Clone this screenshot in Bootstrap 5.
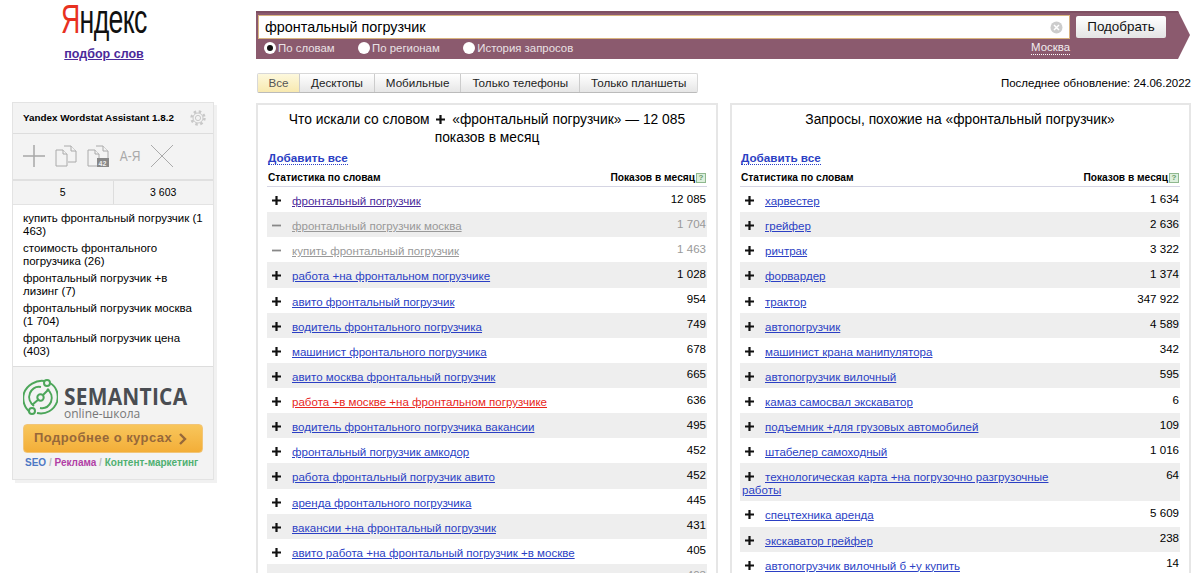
<!DOCTYPE html>
<html lang="ru"><head><meta charset="utf-8"><title>Wordstat</title>
<link href="https://cdn.jsdelivr.net/npm/bootstrap@5.3.0/dist/css/bootstrap.min.css" rel="stylesheet">
<style>
html,body{height:573px;overflow:hidden}
body{font:13px/1.15 "Liberation Sans",Arial,sans-serif;color:#000;background:#fff}
a{color:#2b3fc4}
.pg{width:1200px;height:573px;overflow:hidden}
.lcol{width:256px;flex:none}
.mcol{width:944px;flex:none;padding-top:11px}
.logo{height:103px}
.ya{display:inline-block;margin:-1px 0 0 61px;font:400 41px/41px "Liberation Sans",sans-serif;letter-spacing:-1px;transform:scaleX(.65);transform-origin:0 0;white-space:nowrap;color:#111;height:41px;vertical-align:top}
.ya b{color:#e8311f;font-weight:400}
.sub{display:block;text-align:center;width:208px;font-weight:700;font-size:12.5px;color:#4b2a9a;margin-top:7px;line-height:14px}
.wgt{width:202px;margin-left:12px;border:1px solid #e3e3e3;box-shadow:3px 3px 0 #f1f1f1;background:#fff;margin-top:-1px}
.w-h{height:31px;background:#f3f3f3;border-bottom:1px solid #ddd;font-size:9.85px;font-weight:700;padding:0 7px 0 10px;white-space:nowrap}
.w-t{height:47px;background:#f3f3f3;border-bottom:2px solid #e0e0e0;padding:0 10px 2px;gap:10px}
.az{font-size:15px;color:#a9a9a9;width:22px;text-align:center;transform:scaleX(.8);white-space:nowrap;display:flex;justify-content:center}
.w-c{height:24px;background:#f3f3f3;border-bottom:1px solid #e3e3e3;font-size:10.5px}
.w-c>div{flex:1;text-align:center;line-height:23px}
.w-c>div+div{border-left:1px solid #ddd}
.w-l{padding:7px 10px 8px;font-size:11.5px;line-height:13px;height:161px}
.w-l div{margin-bottom:4px}
.w-p{height:113px;background:#f3f3f3;border-top:1px solid #ddd;padding:11px 10px 0}
.smt{margin-left:6px}
.sm1{font:700 24px/20px "Open Sans","Liberation Sans",sans-serif;color:#4a4d52;letter-spacing:.3px;transform:scaleX(.87);transform-origin:0 0;white-space:nowrap;display:block;height:20px;margin-top:8px}
.sm2{font:12px/11px "Open Sans","Liberation Sans",sans-serif;color:#777;display:block;margin-top:2px}
.ob{height:29px;margin-top:5px;background:linear-gradient(#f8c65c,#f3ae38);border:1px solid #f2c577;border-radius:4px;font-weight:700;font-size:13px;color:#96683a;letter-spacing:.45px;display:flex;align-items:center;padding-left:10px;gap:7px}
.tg{font-size:10px;font-weight:700;margin-top:4px;padding-left:2px;white-space:nowrap;color:#bbb}
.tg .c1{color:#4d78c4}.tg .c2{color:#b13fa5}.tg .c3{color:#4fb071}
.sb{height:48px;width:934px;background:#8b5a6e;border-top:2px solid #7e4f62;clip-path:polygon(0 0,calc(100% - 12px) 0,100% 50%,calc(100% - 12px) 100%,0 100%);padding:2px 0 0 2px}
.qin{width:812px;height:24px;background:#fff;border:1px solid #d9b47f;font-size:14.4px;padding:0 6px;line-height:22px}
.qbtn{width:90px;height:22px;margin-left:6px;background:linear-gradient(#fff,#e4e4e4);border-radius:2px;font-size:13.4px;line-height:22px;text-align:center;color:#111;margin-top:1px}
.opts{height:18px;color:#e9e1e4;font-size:11.4px;width:812px;padding-left:6px;line-height:16px}
.opts i{display:inline-block;width:12px;height:12px;border-radius:50%;background:#fff;margin-right:2px;vertical-align:-2px;position:relative}
.opts i.on::after{content:"";position:absolute;left:3px;top:3px;width:6px;height:6px;border-radius:50%;background:#111}
.opts span{margin-right:23.500px}
.msk{margin-left:auto;color:#f2ecee;border-bottom:1px dotted #fff;line-height:13px;height:14px}
.tabs{margin-top:14px;height:30px;width:935px;padding-left:1px}
.tbg{display:flex;height:20px;border:1px solid #d8d8d8;border-bottom-color:#bbb;border-radius:2px;font-size:11.65px;line-height:18px;background:linear-gradient(#fff,#e6e6e6);color:#222}
.tbg div{padding:0 11px;border-left:1px solid #ccc}
.tbg div:first-child{border-left:0;background:linear-gradient(#fdf8dd,#f8e9b0);color:#555;padding:0 10.500px}
.upd{margin-left:auto;font-size:11.5px;line-height:20px}
.pnls{gap:12px;width:936px}
.pnl{width:462px;height:480px;border:2px solid #e6e6e6;border-bottom:0;padding:0 9px;flex:none}
.pnl+.pnl{width:461px;padding-left:8px}
.ph{font-size:13.8px;line-height:18px;height:43px;padding:6px 18px 0;text-align:center}
.ph svg{margin:0 3px;vertical-align:0}
.add{font-weight:700;font-size:11.7px;height:19px;line-height:14px;padding:2px 0 0 1px;margin-top:1px}
.add a{text-decoration:none;border-bottom:1px dotted #2b3fc4}
.hd{height:20px;border-bottom:1px solid #d5d5e3;font-size:10.2px;font-weight:700;padding:5px 1px 0;line-height:12px;margin-top:-1px}
.hd i{display:inline-block;width:10px;height:10px;border:1px solid #8fb88f;background:#dcefdc;color:#6a9a6a;font:700 8px/8px "Liberation Sans";text-align:center;font-style:normal;margin-left:1px;vertical-align:1px}
.rw{min-height:25.14px;padding:0 1px 0 0;font-size:11.55px}
.rw:nth-child(even){background:#eee}
.rw .wd{width:330px;padding:8px 0 4px 2px;line-height:13px}
.rw .pm{display:inline-block;width:23px;padding-left:3px;line-height:9px}
.rw .pm svg{float:left;margin-top:-2px}
.rw .nm{margin-left:auto;padding-top:4.500px;line-height:14px}
.rw.off a,.rw.off .nm{color:#999}
.rw.rd a{color:#e8261c}
.vis{color:#4b2a9a!important}
</style></head><body>
<svg width="0" height="0" class="d-block" aria-hidden="true"><defs>
<symbol id="p" viewBox="0 0 9 9"><path d="M4.500 0v9M0 4.500h9" stroke="#111" stroke-width="2.200"/></symbol>
<symbol id="m" viewBox="0 0 9 9"><path d="M0 4.500h9" stroke="#888" stroke-width="1.800"/></symbol>
</defs></svg>
<div class="pg d-flex">
<div class="lcol">
<div class="logo">
<div class="ya"><b>Я</b>ндекс</div>
<a class="sub" href="#">подбор слов</a>
</div>
<div class="wgt">
<div class="w-h d-flex align-items-center justify-content-between"><span>Yandex Wordstat Assistant 1.8.2</span>
<svg width="16" height="16" viewBox="0 0 16 16" fill="none" stroke="#c8c8c8"><circle cx="8" cy="8" r="6.500" stroke-width="2.400" stroke-dasharray="2.500 2.600"/><circle cx="8" cy="8" r="5"/><circle cx="8" cy="8" r="2.600"/></svg></div>
<div class="w-t d-flex align-items-center">
<svg width="22" height="22" viewBox="0 0 22 22" stroke="#a8a8a8" stroke-width="1.500"><path d="M11 0v22M0 11h22"/></svg>
<svg width="22" height="22" viewBox="0 0 22 22" fill="#f3f3f3" stroke="#aaa"><path d="M9 1h7l5 5v11h-8"/><path d="M16 1v5h5"/><path d="M1 5h7l4 4v12H1z"/><path d="M8 5v4h4"/></svg>
<svg width="22" height="22" viewBox="0 0 22 22" fill="#f3f3f3" stroke="#aaa"><path d="M9 1h7l5 5v10"/><path d="M16 1v5h5"/><path d="M1 5h7l4 4v12H1z"/><path d="M8 5v4h4"/><rect x="10" y="13" width="12" height="9" fill="#888" stroke="none"/><text x="11.500" y="20.500" font-size="7" font-weight="700" fill="#eee" stroke="none" font-family="Liberation Sans">42</text></svg>
<span class="az">А-Я</span>
<svg width="22" height="22" viewBox="0 0 22 22" stroke="#aaa"><path d="M0 0l22 22M22 0L0 22"/></svg>
</div>
<div class="w-c d-flex"><div>5</div><div>3 603</div></div>
<div class="w-l">
<div>купить фронтальный погрузчик (1 463)</div>
<div>стоимость фронтального погрузчика (26)</div>
<div>фронтальный погрузчик +в лизинг (7)</div>
<div>фронтальный погрузчик москва (1 704)</div>
<div>фронтальный погрузчик цена (403)</div>
</div>
<div class="w-p">
<div class="d-flex">
<svg width="35" height="39" viewBox="0 0 35 39" fill="none" stroke="#4ca65a" stroke-width="2" class="flex-shrink-0"><path d="M8 35C1 30-1 22 1 15 4 7 13 2 21 3"/><path d="M27 5c7 4 9 12 7 19-3 8-11 13-20 11"/><path d="M11 28c-4-3-6-8-4-13 2-4 6-7 11-6"/><path d="M24 11c4 3 6 8 4 13-2 4-6 7-11 6"/><circle cx="17.500" cy="19.500" r="3.200"/><path d="M9 27l7-6M26 11l-6 6"/><circle cx="24" cy="5" r="3" fill="#f3f3f3"/><circle cx="9" cy="33" r="3" fill="#f3f3f3"/></svg>
<div class="smt"><span class="sm1">SEMANTICA</span><span class="sm2">online-школа</span></div>
</div>
<div class="ob"><span>Подробнее о курсах</span><svg width="8" height="12" viewBox="0 0 8 12" fill="none" stroke="#96683a" stroke-width="2.400"><path d="M1 1l5 5-5 5"/></svg></div>
<div class="tg"><span class="c1">SEO</span> / <span class="c2">Реклама</span> / <span class="c3">Контент-маркетинг</span></div>
</div>
</div>
</div>
<div class="mcol">
<div class="sb">
<div class="d-flex"><div class="qin d-flex justify-content-between align-items-center"><span>фронтальный погрузчик</span><svg width="13" height="13" viewBox="0 0 13 13"><circle cx="6.500" cy="6.500" r="6" fill="#ccc"/><path d="M4 4l5 5M9 4l-5 5" stroke="#fff" stroke-width="1.500"/></svg></div><div class="qbtn">Подобрать</div></div>
<div class="opts d-flex align-items-center"><span><i class="on"></i>По словам</span><span><i></i>По регионам</span><span><i></i>История запросов</span><a class="msk text-decoration-none">Москва</a></div>
</div>
<div class="tabs d-flex">
<div class="tbg"><div>Все</div><div>Десктопы</div><div>Мобильные</div><div>Только телефоны</div><div>Только планшеты</div></div>
<div class="upd">Последнее обновление: 24.06.2022</div>
</div>
<div class="pnls d-flex">
<div class="pnl">
<div class="ph">Что искали со словом <svg width="9" height="9"><use href="#p"/></svg> «фронтальный погрузчик» — 12 085 показов в месяц</div>
<div class="add"><a href="#">Добавить все</a></div>
<div class="hd d-flex justify-content-between"><span>Статистика по словам</span><span>Показов в месяц<i>?</i></span></div>
<div>
<div class="rw d-flex"><div class="wd"><span class="pm"><svg width="9" height="9"><use href="#p"/></svg></span><a class="vis" href="#">фронтальный погрузчик</a></div><div class="nm">12 085</div></div>
<div class="rw d-flex off"><div class="wd"><span class="pm"><svg width="9" height="9"><use href="#m"/></svg></span><a href="#">фронтальный погрузчик москва</a></div><div class="nm">1 704</div></div>
<div class="rw d-flex off"><div class="wd"><span class="pm"><svg width="9" height="9"><use href="#m"/></svg></span><a href="#">купить фронтальный погрузчик</a></div><div class="nm">1 463</div></div>
<div class="rw d-flex"><div class="wd"><span class="pm"><svg width="9" height="9"><use href="#p"/></svg></span><a href="#">работа +на фронтальном погрузчике</a></div><div class="nm">1 028</div></div>
<div class="rw d-flex"><div class="wd"><span class="pm"><svg width="9" height="9"><use href="#p"/></svg></span><a href="#">авито фронтальный погрузчик</a></div><div class="nm">954</div></div>
<div class="rw d-flex"><div class="wd"><span class="pm"><svg width="9" height="9"><use href="#p"/></svg></span><a href="#">водитель фронтального погрузчика</a></div><div class="nm">749</div></div>
<div class="rw d-flex"><div class="wd"><span class="pm"><svg width="9" height="9"><use href="#p"/></svg></span><a href="#">машинист фронтального погрузчика</a></div><div class="nm">678</div></div>
<div class="rw d-flex"><div class="wd"><span class="pm"><svg width="9" height="9"><use href="#p"/></svg></span><a href="#">авито москва фронтальный погрузчик</a></div><div class="nm">665</div></div>
<div class="rw d-flex rd"><div class="wd"><span class="pm"><svg width="9" height="9"><use href="#p"/></svg></span><a href="#">работа +в москве +на фронтальном погрузчике</a></div><div class="nm">636</div></div>
<div class="rw d-flex"><div class="wd"><span class="pm"><svg width="9" height="9"><use href="#p"/></svg></span><a href="#">водитель фронтального погрузчика вакансии</a></div><div class="nm">495</div></div>
<div class="rw d-flex"><div class="wd"><span class="pm"><svg width="9" height="9"><use href="#p"/></svg></span><a href="#">фронтальный погрузчик амкодор</a></div><div class="nm">452</div></div>
<div class="rw d-flex"><div class="wd"><span class="pm"><svg width="9" height="9"><use href="#p"/></svg></span><a href="#">работа фронтальный погрузчик авито</a></div><div class="nm">452</div></div>
<div class="rw d-flex"><div class="wd"><span class="pm"><svg width="9" height="9"><use href="#p"/></svg></span><a href="#">аренда фронтального погрузчика</a></div><div class="nm">445</div></div>
<div class="rw d-flex"><div class="wd"><span class="pm"><svg width="9" height="9"><use href="#p"/></svg></span><a href="#">вакансии +на фронтальный погрузчик</a></div><div class="nm">431</div></div>
<div class="rw d-flex"><div class="wd"><span class="pm"><svg width="9" height="9"><use href="#p"/></svg></span><a href="#">авито работа +на фронтальный погрузчик +в москве</a></div><div class="nm">405</div></div>
<div class="rw d-flex off"><div class="wd"><span class="pm"><svg width="9" height="9"><use href="#m"/></svg></span><a href="#">фронтальный погрузчик цена</a></div><div class="nm">403</div></div>
</div>
</div>
<div class="pnl">
<div class="ph">Запросы, похожие на «фронтальный погрузчик»</div>
<div class="add"><a href="#">Добавить все</a></div>
<div class="hd d-flex justify-content-between"><span>Статистика по словам</span><span>Показов в месяц<i>?</i></span></div>
<div>
<div class="rw d-flex"><div class="wd"><span class="pm"><svg width="9" height="9"><use href="#p"/></svg></span><a href="#">харвестер</a></div><div class="nm">1 634</div></div>
<div class="rw d-flex"><div class="wd"><span class="pm"><svg width="9" height="9"><use href="#p"/></svg></span><a href="#">грейфер</a></div><div class="nm">2 636</div></div>
<div class="rw d-flex"><div class="wd"><span class="pm"><svg width="9" height="9"><use href="#p"/></svg></span><a href="#">ричтрак</a></div><div class="nm">3 322</div></div>
<div class="rw d-flex"><div class="wd"><span class="pm"><svg width="9" height="9"><use href="#p"/></svg></span><a href="#">форвардер</a></div><div class="nm">1 374</div></div>
<div class="rw d-flex"><div class="wd"><span class="pm"><svg width="9" height="9"><use href="#p"/></svg></span><a href="#">трактор</a></div><div class="nm">347 922</div></div>
<div class="rw d-flex"><div class="wd"><span class="pm"><svg width="9" height="9"><use href="#p"/></svg></span><a href="#">автопогрузчик</a></div><div class="nm">4 589</div></div>
<div class="rw d-flex"><div class="wd"><span class="pm"><svg width="9" height="9"><use href="#p"/></svg></span><a href="#">машинист крана манипулятора</a></div><div class="nm">342</div></div>
<div class="rw d-flex"><div class="wd"><span class="pm"><svg width="9" height="9"><use href="#p"/></svg></span><a href="#">автопогрузчик вилочный</a></div><div class="nm">595</div></div>
<div class="rw d-flex"><div class="wd"><span class="pm"><svg width="9" height="9"><use href="#p"/></svg></span><a href="#">камаз самосвал экскаватор</a></div><div class="nm">6</div></div>
<div class="rw d-flex"><div class="wd"><span class="pm"><svg width="9" height="9"><use href="#p"/></svg></span><a href="#">подъемник +для грузовых автомобилей</a></div><div class="nm">109</div></div>
<div class="rw d-flex"><div class="wd"><span class="pm"><svg width="9" height="9"><use href="#p"/></svg></span><a href="#">штабелер самоходный</a></div><div class="nm">1 016</div></div>
<div class="rw d-flex"><div class="wd"><span class="pm"><svg width="9" height="9"><use href="#p"/></svg></span><a href="#">технологическая карта +на погрузочно разгрузочные работы</a></div><div class="nm">64</div></div>
<div class="rw d-flex"><div class="wd"><span class="pm"><svg width="9" height="9"><use href="#p"/></svg></span><a href="#">спецтехника аренда</a></div><div class="nm">5 609</div></div>
<div class="rw d-flex"><div class="wd"><span class="pm"><svg width="9" height="9"><use href="#p"/></svg></span><a href="#">экскаватор грейфер</a></div><div class="nm">238</div></div>
<div class="rw d-flex"><div class="wd"><span class="pm"><svg width="9" height="9"><use href="#p"/></svg></span><a href="#">автопогрузчик вилочный б +у купить</a></div><div class="nm">14</div></div>
</div>
</div>
</div>
</div>
</div>
</body></html>
